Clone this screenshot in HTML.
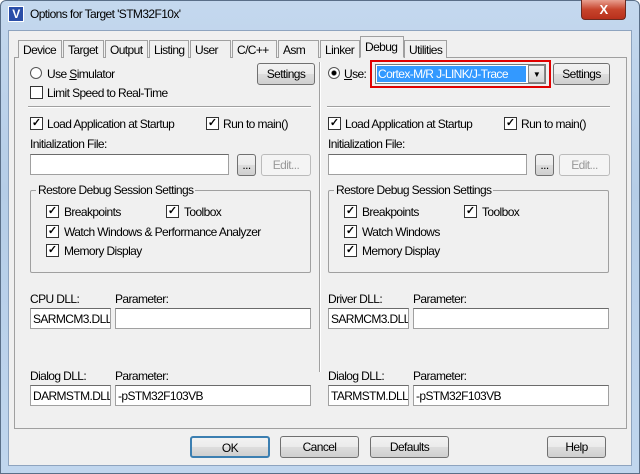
<!DOCTYPE html><html><head><style>
*{margin:0;padding:0;box-sizing:border-box}
body{width:640px;height:474px;position:relative;overflow:hidden;background:#fff;font-family:"Liberation Sans",sans-serif;font-size:11px;color:#000;letter-spacing:-0.6px}
.a{position:absolute;white-space:nowrap}
.frame{left:0;top:0;width:640px;height:474px;background:linear-gradient(#c4d8ee,#b5cde7 40%,#c0d6ee);border:1px solid #5a6f88;border-radius:6px 6px 0 0}
.client{left:8px;top:30px;width:624px;height:436px;background:#f0f0f0;border:1px solid #8ea4bf}
.tab{top:40px;height:18px;background:#f0f0f0;border:1px solid #a0a0a0;border-bottom:none;padding:2px 0 0 4px;font-size:12px}
.panel{left:14px;top:57px;width:613px;height:372px;border:1px solid #a0a0a0;background:#f0f0f0}
.btn{height:22px;border:1px solid #707070;border-radius:3px;background:linear-gradient(#f2f2f2,#ebebeb 50%,#dddddd 51%,#cfcfcf);text-align:center;line-height:20px;font-size:12px}
.cb{width:13px;height:13px;border:1px solid #333;background:#fff;font-size:11px;line-height:10px;text-align:center;font-weight:bold;letter-spacing:0}
.rd{width:12px;height:12px;border:1px solid #555;border-radius:50%;background:#fff}
.inp{height:21px;border:1px solid #a0a0a0;border-top-color:#6b6b6b;background:#fff;padding:3px 2px;font-size:12px;overflow:hidden}
.t{font-size:12px}
.sep{height:2px;border-top:1px solid #a0a0a0;border-bottom:1px solid #fff}
.grp{border:1px solid #a0a0a0;border-radius:2px}
.gl{background:#f0f0f0;padding:0 2px;font-size:12px}
</style></head><body>
<div class="a frame"></div>
<div class="a" style="left:8px;top:6px;width:16px;height:16px;background:#2a4ea8;border:1px solid #fff;color:#fff;font-weight:bold;font-size:12px;text-align:center;line-height:14px">V</div>
<div class="a" style="left:30px;top:7px;font-size:12px">Options for Target 'STM32F10x'</div>
<div class="a" style="left:581px;top:0;width:45px;height:20px;background:linear-gradient(#e8a090,#c7442c 50%,#b8301c);border:1px solid #6b2a20;border-top:none;border-radius:0 0 4px 4px;color:#fff;text-align:center;font-weight:bold;font-size:13px;line-height:19px">X</div>
<div class="a client"></div>
<div class="a panel"></div>
<div class="a tab" style="left:18px;width:44px">Device</div>
<div class="a tab" style="left:63px;width:41px">Target</div>
<div class="a tab" style="left:105px;width:43px">Output</div>
<div class="a tab" style="left:149px;width:40px">Listing</div>
<div class="a tab" style="left:190px;width:41px">User</div>
<div class="a tab" style="left:232px;width:45px">C/C++</div>
<div class="a tab" style="left:278px;width:41px">Asm</div>
<div class="a tab" style="left:320px;width:40px">Linker</div>
<div class="a tab" style="left:360px;top:36px;height:22px;width:44px;border-bottom:1px solid #f0f0f0;padding-top:3px">Debug</div>
<div class="a tab" style="left:404px;width:43px">Utilities</div>
<div class="a" style="left:319px;top:62px;width:2px;height:310px;border-left:1px solid #a0a0a0;border-right:1px solid #fff"></div>

<div class="a rd" style="left:30px;top:67px"></div><div class="a t" style="left:47px;top:67px">Use <u>S</u>imulator</div>
<div class="a btn" style="left:257px;top:63px;width:58px">Settings</div>
<div class="a cb" style="left:30px;top:86px"></div><div class="a t" style="left:47px;top:86px">Limit Speed to Real-Time</div>
<div class="a sep" style="left:28px;top:106px;width:283px"></div>
<div class="a cb" style="left:30px;top:117px">✓</div><div class="a t" style="left:47px;top:117px">Load Application at Startup</div>
<div class="a cb" style="left:206px;top:117px">✓</div><div class="a t" style="left:223px;top:117px">Run to main()</div>
<div class="a t" style="left:30px;top:137px">Initialization File:</div>
<div class="a inp" style="left:30px;top:154px;width:199px"></div>
<div class="a btn" style="left:237px;top:154px;width:19px">...</div>
<div class="a btn" style="left:261px;top:154px;width:50px;color:#999;border-color:#bbb;background:#f4f4f4">Edit...</div>
<div class="a grp" style="left:30px;top:190px;width:281px;height:83px"></div>
<div class="a gl" style="left:36px;top:183px">Restore Debug Session Settings</div>
<div class="a cb" style="left:46px;top:205px">✓</div><div class="a t" style="left:64px;top:205px">Breakpoints</div>
<div class="a cb" style="left:166px;top:205px">✓</div><div class="a t" style="left:184px;top:205px">Toolbox</div>
<div class="a cb" style="left:46px;top:225px">✓</div><div class="a t" style="left:64px;top:225px">Watch Windows &amp; Performance Analyzer</div>
<div class="a cb" style="left:46px;top:244px">✓</div><div class="a t" style="left:64px;top:244px">Memory Display</div>
<div class="a t" style="left:30px;top:292px">CPU DLL:</div><div class="a t" style="left:115px;top:292px">Parameter:</div>
<div class="a inp" style="left:30px;top:308px;width:81px">SARMCM3.DLL</div>
<div class="a inp" style="left:115px;top:308px;width:196px"></div>
<div class="a t" style="left:30px;top:369px">Dialog DLL:</div><div class="a t" style="left:115px;top:369px">Parameter:</div>
<div class="a inp" style="left:30px;top:385px;width:81px">DARMSTM.DLL</div>
<div class="a inp" style="left:115px;top:385px;width:196px">-pSTM32F103VB</div>

<div class="a rd" style="left:328px;top:67px;background:radial-gradient(#000 2px,#fff 3px)"></div><div class="a t" style="left:344px;top:67px"><u>U</u>se:</div>
<div class="a" style="left:370px;top:60px;width:181px;height:28px;border:2px solid #e00000"></div>
<div class="a" style="left:375px;top:64px;width:171px;height:20px;border:1px solid #7a7a7a;background:#fff"></div>
<div class="a" style="left:377px;top:66px;width:149px;height:16px;background:#3399ff;color:#fff;font-size:12px;line-height:16px;padding-left:1px">Cortex-M/R J-LINK/J-Trace</div>
<div class="a" style="left:528px;top:65px;width:17px;height:18px;border:1px solid #888;background:linear-gradient(#f2f2f2,#d6d6d6);text-align:center;font-size:8px;line-height:18px">▼</div>
<div class="a btn" style="left:553px;top:63px;width:57px">Settings</div>
<div class="a sep" style="left:327px;top:106px;width:283px"></div>
<div class="a cb" style="left:328px;top:117px">✓</div><div class="a t" style="left:345px;top:117px">Load Application at Startup</div>
<div class="a cb" style="left:504px;top:117px">✓</div><div class="a t" style="left:521px;top:117px">Run to main()</div>
<div class="a t" style="left:328px;top:137px">Initialization File:</div>
<div class="a inp" style="left:328px;top:154px;width:199px"></div>
<div class="a btn" style="left:535px;top:154px;width:19px">...</div>
<div class="a btn" style="left:559px;top:154px;width:51px;color:#999;border-color:#bbb;background:#f4f4f4">Edit...</div>
<div class="a grp" style="left:328px;top:190px;width:281px;height:83px"></div>
<div class="a gl" style="left:334px;top:183px">Restore Debug Session Settings</div>
<div class="a cb" style="left:344px;top:205px">✓</div><div class="a t" style="left:362px;top:205px">Breakpoints</div>
<div class="a cb" style="left:464px;top:205px">✓</div><div class="a t" style="left:482px;top:205px">Toolbox</div>
<div class="a cb" style="left:344px;top:225px">✓</div><div class="a t" style="left:362px;top:225px">Watch Windows</div>
<div class="a cb" style="left:344px;top:244px">✓</div><div class="a t" style="left:362px;top:244px">Memory Display</div>
<div class="a t" style="left:328px;top:292px">Driver DLL:</div><div class="a t" style="left:413px;top:292px">Parameter:</div>
<div class="a inp" style="left:328px;top:308px;width:81px">SARMCM3.DLL</div>
<div class="a inp" style="left:413px;top:308px;width:196px"></div>
<div class="a t" style="left:328px;top:369px">Dialog DLL:</div><div class="a t" style="left:413px;top:369px">Parameter:</div>
<div class="a inp" style="left:328px;top:385px;width:81px">TARMSTM.DLL</div>
<div class="a inp" style="left:413px;top:385px;width:196px">-pSTM32F103VB</div>

<div class="a btn" style="left:190px;top:436px;width:80px;border:2px solid #3c7fb1">OK</div>
<div class="a btn" style="left:280px;top:436px;width:79px">Cancel</div>
<div class="a btn" style="left:370px;top:436px;width:79px">Defaults</div>
<div class="a btn" style="left:547px;top:436px;width:59px">Help</div>
</body></html>
